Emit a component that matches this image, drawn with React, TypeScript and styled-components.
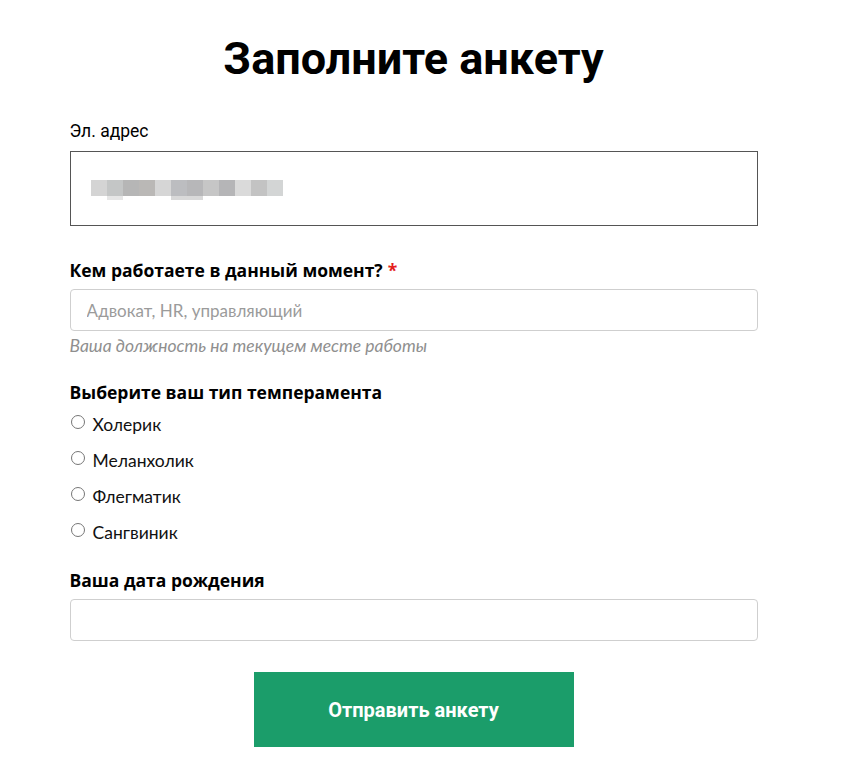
import React from 'react';
import styled, { createGlobalStyle } from 'styled-components';

const GlobalStyle = createGlobalStyle`
    body {
        margin: 0;
        background: #fff;
        font-family: Roboto, "Liberation Sans", sans-serif;
        color: #000;
    }
`;

const StyledPage = styled.div`
    width: 827px;
    display: flex;
    flex-direction: column;
    align-items: center;
    padding-top: 27px;
`;

const StyledTitle = styled.h1`
    margin: 0 0 29px;
    font-family: Roboto, sans-serif;
    font-weight: 700;
    font-size: 45px;
    line-height: 64px;
`;

const StyledForm = styled.form`
    width: 688px;
    display: flex;
    flex-direction: column;
`;

const StyledField = styled.div<{ $gap?: number }>`
    display: flex;
    flex-direction: column;
    margin-bottom: ${p => p.$gap ?? 30}px;
`;

const StyledPlainLabel = styled.label`
    font-family: Roboto, sans-serif;
    font-size: 17.5px;
    line-height: 22px;
    margin-bottom: 9px;
`;

const StyledLabel = styled.label`
    font-family: "Open Sans", sans-serif;
    font-weight: 700;
    font-size: 17.5px;
    line-height: 24px;
    margin-bottom: 7px;
`;

const StyledRequired = styled.span`
    color: #e41d1d;
    margin-left: 5px;
`;

const StyledEmailBox = styled.div`
    height: 75px;
    box-sizing: border-box;
    border: 1px solid #555;
    display: flex;
    align-items: center;
    padding-left: 20px;
`;

const StyledInput = styled.input`
    height: 42px;
    box-sizing: border-box;
    border: 1px solid #cfcfcf;
    border-radius: 4px;
    padding: 0 16px;
    font-family: Lato, "Open Sans", sans-serif;
    font-size: 17px;
    outline: none;

    &::placeholder {
        color: #9b9b9b;
    }
`;

const StyledHint = styled.div`
    font-family: Lato, "Open Sans", sans-serif;
    font-style: italic;
    font-size: 17.5px;
    color: #8f8f8f;
    margin-top: 4px;
`;

const StyledRadioRow = styled.label`
    display: flex;
    align-items: center;
    height: 36px;
    font-family: Lato, "Open Sans", sans-serif;
    font-size: 17.5px;
    color: #111;

    input {
        margin: 0 8px 0 1px;
        width: 14px;
        height: 14px;
        position: relative;
        top: -2px;
    }
`;

const StyledRadioList = styled.div`
    display: flex;
    flex-direction: column;
    margin-top: -5px;
`;

const StyledSubmit = styled.button`
    align-self: center;
    width: 320px;
    height: 75px;
    border: none;
    background: #1b9d6a;
    color: #fff;
    font-family: Roboto, sans-serif;
    font-weight: 700;
    font-size: 20px;
    margin-top: 1px;
    cursor: pointer;
`;

const redacted = ['#d4d4d4', '#c4c6c6', '#b6b6b6', '#bab8b6', '#d6d6d6', '#bcbdc0',
    '#b7b7b9', '#c6c6c6', '#b5b5b7', '#dadada', '#c3c3c3', '#d3d5d5'];

const RedactedEmail = () => (
    <svg width={192} height={22} style={{ marginTop: 4 }}>
        {redacted.map((c, i) => <rect key={i} x={i * 16} y={0} width={16} height={16} fill={c} />)}
        <rect x={16} y={16} width={16} height={4} fill="#e6e6e6" />
        <rect x={80} y={16} width={32} height={4} fill="#d9d9d9" />
    </svg>
);

const temperaments = ['Холерик', 'Меланхолик', 'Флегматик', 'Сангвиник'];

export default () => (
    <>
        <GlobalStyle />
        <StyledPage>
            <StyledTitle>Заполните анкету</StyledTitle>
            <StyledForm onSubmit={e => e.preventDefault()}>
                <StyledField $gap={32}>
                    <StyledPlainLabel>Эл. адрес</StyledPlainLabel>
                    <StyledEmailBox><RedactedEmail /></StyledEmailBox>
                </StyledField>
                <StyledField $gap={24}>
                    <StyledLabel>Кем работаете в данный момент?<StyledRequired>*</StyledRequired></StyledLabel>
                    <StyledInput placeholder="Адвокат, HR, управляющий" />
                    <StyledHint>Ваша должность на текущем месте работы</StyledHint>
                </StyledField>
                <StyledField $gap={18}>
                    <StyledLabel>Выберите ваш тип темперамента</StyledLabel>
                    <StyledRadioList>
                        {temperaments.map(t => (
                            <StyledRadioRow key={t}>
                                <input type="radio" name="temper" />
                                {t}
                            </StyledRadioRow>
                        ))}
                    </StyledRadioList>
                </StyledField>
                <StyledField $gap={30}>
                    <StyledLabel>Ваша дата рождения</StyledLabel>
                    <StyledInput />
                </StyledField>
                <StyledSubmit>Отправить анкету</StyledSubmit>
            </StyledForm>
        </StyledPage>
    </>
);
